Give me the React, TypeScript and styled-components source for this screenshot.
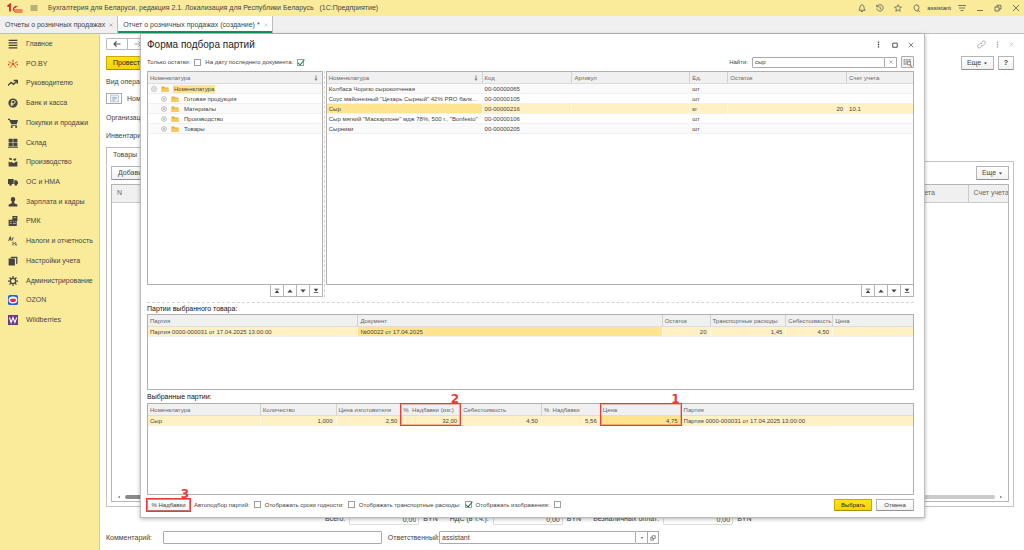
import React from 'react';
import styled, { createGlobalStyle, css } from 'styled-components';

const Global = createGlobalStyle`
  * { box-sizing: border-box; }
  body { margin: 0; background: #fff; color: #444; font: 7px/10px "Liberation Sans", Arial, sans-serif; }
  button, input { font: inherit; color: inherit; margin: 0; padding: 0; }
  button { cursor: pointer; white-space: nowrap; }
  svg { display: block; flex: none; }
`;

/* ---------- page shell ---------- */
const Page = styled.div`
  min-height: 100vh;
  display: grid;
  grid-template-rows: 16px 18px 1fr;
`;
const TopBar = styled.header`
  display: flex;
  align-items: center;
  background: #faeb9b;
  padding: 0 4px 0 7px;
`;
const AppTitle = styled.div`
  margin-left: 10px;
  flex: 1;
  white-space: pre;
`;
const Group = styled.div<{ $gap: number }>`
  display: flex;
  align-items: center;
  gap: ${(p) => p.$gap}px;
`;
const TopTools = styled(Group)`
  padding-right: 10px;
`;
const UserLink = styled.a`
  color: #333;
  font-size: 6px;
  text-decoration: none;
`;
const IconButton = styled.button<{ $tone?: string }>`
  border: 0;
  background: none;
  display: flex;
  color: ${(p) => p.$tone ?? '#555'};
`;
const TabStrip = styled.nav`
  display: flex;
  background: #f0f0f0;
  border-bottom: 1px solid #bdbdbd;
`;
const DocTab = styled.div<{ $active?: boolean }>`
  display: flex;
  align-items: center;
  gap: 4px;
  padding: 0 4px 0 5px;
  border-right: 1px solid #bdbdbd;
  white-space: nowrap;
  ${(p) =>
    p.$active &&
    css`
      background: #fff;
      box-shadow: inset 0 -2px 0 #16925a;
    `}
`;
const Body = styled.div`
  display: grid;
  grid-template-columns: 100px 1fr;
`;
const Sidebar = styled.aside`
  background: #faeb9b;
  border-right: 1px solid #d8cd94;
`;
const MenuList = styled.ul`
  list-style: none;
  margin: 0;
  padding: 0;
  height: 296px;
  display: grid;
  grid-auto-rows: 1fr;
`;
const MenuLink = styled.a`
  height: 100%;
  display: flex;
  align-items: center;
  gap: 8px;
  padding-left: 8px;
  color: #444;
  text-decoration: none;
`;
const Main = styled.main`
  position: relative;
  display: flex;
  flex-direction: column;
  padding: 4px 10px 6px 6px;
`;

/* ---------- document form ---------- */
const FormRow = styled.div<{ $h: number; $top?: number }>`
  display: flex;
  align-items: center;
  height: ${(p) => p.$h}px;
  margin-top: ${(p) => p.$top ?? 0}px;
  white-space: nowrap;
`;
const Spacer = styled.div`
  flex: 1;
`;
const Button = styled.button<{ $primary?: boolean; $w?: number; $small?: boolean }>`
  height: ${(p) => (p.$small ? 12 : 14)}px;
  width: ${(p) => (p.$w ? `${p.$w}px` : 'auto')};
  padding: 0 6px;
  display: flex;
  align-items: center;
  justify-content: center;
  font-size: ${(p) => (p.$small ? 6 : 7)}px;
  border: 1px solid ${(p) => (p.$primary ? '#c9ab00' : '#b5b5b5')};
  border-bottom-color: ${(p) => (p.$primary ? '#a88f00' : '#929292')};
  border-radius: 1px;
  background: ${(p) => (p.$primary ? 'linear-gradient(#ffe31a, #f5d400)' : 'linear-gradient(#fff, #f1f1f1)')};
  color: ${(p) => (p.$primary ? '#222' : '#444')};
`;
const NavPair = styled.div`
  display: flex;
  height: 12px;
  border: 1px solid #bbb;
  border-radius: 1px;
  button { width: 20px; align-items: center; justify-content: center; }
  button + button { border-left: 1px solid #bbb; }
`;
const SquareButton = styled.button`
  width: 16px;
  height: 11px;
  margin-right: 5px;
  display: grid;
  place-items: center;
  border: 1px solid #a9a9a9;
  background: #fff;
`;
const SectionTab = styled.button`
  align-self: flex-start;
  height: 15px;
  margin: 6px 0 -1px;
  padding: 0 6px;
  border: 1px solid #bdbdbd;
  border-bottom: 0;
  background: #fff;
  position: relative;
`;
const Panel = styled.section`
  flex: 1;
  display: flex;
  flex-direction: column;
  border: 1px solid #c4c4c4;
  padding: 4px;
`;
const GoodsFrame = styled.div`
  flex: 1;
  display: flex;
  flex-direction: column;
  justify-content: space-between;
  margin-top: 4px;
  border: 1px solid #b5b5b5;
`;
const GoodsTable = styled.table`
  width: 100%;
  table-layout: fixed;
  border-collapse: collapse;
  th {
    height: 17px;
    padding: 0 5px;
    background: #f0f0f0;
    border-bottom: 1px solid #ccc;
    font-weight: 400;
    text-align: left;
    white-space: nowrap;
    overflow: hidden;
    color: #666;
  }
  th + th { border-left: 1px solid #ccc; }
`;
const ScrollBar = styled.div`
  display: flex;
  align-items: center;
  gap: 4px;
  height: 8px;
  padding: 0 5px;
  color: #666;
`;
const Track = styled.div`
  flex: 1;
  height: 4px;
  border-radius: 2px;
  background: linear-gradient(to right, #8a8a8a 60%, #cbcbcb 60%);
`;
const TextField = styled.input<{ $w: number }>`
  width: ${(p) => p.$w}px;
  height: 13px;
  padding: 0 2px;
  border: 1px solid #aaa;
  border-radius: 1px;
  background: #fff;
  outline: 0;
`;
const Amount = styled(TextField)`
  height: 12px;
  border-color: #ddd;
  text-align: right;
`;
const FieldLabel = styled.label<{ $w: number }>`
  width: ${(p) => p.$w}px;
  flex: none;
`;
const AddOn = styled.button<{ $w: number }>`
  width: ${(p) => p.$w}px;
  height: 13px;
  border: 1px solid #aaa;
  border-left: 0;
  background: #fff;
  display: grid;
  place-items: center;
`;

/* ---------- selection dialog ---------- */
const Dialog = styled.section`
  position: absolute;
  inset: 0 99px 32px 40px;
  display: flex;
  flex-direction: column;
  padding: 0 10px 6px 6px;
  background: #fff;
  border: 1px solid #bdbdbd;
  border-top: 0;
  box-shadow: 0 1px 4px rgba(0, 0, 0, 0.3);
  font-size: 6px;
  line-height: 8px;
`;
const DialogHead = styled.div`
  display: flex;
  align-items: center;
  height: 21px;
`;
const DialogTitle = styled.h1`
  flex: 1;
  margin: 0;
  font: 400 10px/12px "Liberation Sans", Arial, sans-serif;
  color: #222;
`;
const DialogTools = styled.div`
  display: flex;
  align-items: center;
  height: 14px;
  margin-bottom: 2px;
  white-space: nowrap;
`;
const CheckLabel = styled.label`
  display: flex;
  align-items: center;
  gap: 4px;
  margin-right: 4px;
  white-space: nowrap;
`;
const Tick = styled.input.attrs({ type: 'checkbox' })<{ $green?: boolean }>`
  appearance: none;
  position: relative;
  width: 7px;
  height: 7px;
  border: 1px solid #a0a0a0;
  background: #fff;
  &:checked::after {
    content: '';
    position: absolute;
    left: 1px;
    top: -2px;
    width: 3px;
    height: 6px;
    border: solid ${(p) => (p.$green ? '#0a9150' : '#1d6b45')};
    border-width: 0 1px 1px 0;
    transform: rotate(40deg);
  }
`;
const SearchField = styled(TextField)`
  height: 11px;
  font-size: 6px;
`;
const SearchClear = styled(AddOn)`
  height: 11px;
`;
const SearchButton = styled.button`
  width: 13px;
  height: 12px;
  margin-left: 4px;
  display: grid;
  place-items: center;
  border: 1px solid #aaa;
  border-radius: 1px;
  background: #f5f5f5;
`;
const Lists = styled.div`
  flex: 229 0 0;
  display: grid;
  grid-template-columns: 176fr 589fr;
  column-gap: 3px;
`;
const ListColumn = styled.div`
  position: relative;
  min-width: 0;
  display: flex;
  flex-direction: column;
  & + &::before {
    content: '';
    position: absolute;
    left: -2px;
    top: 0;
    bottom: 0;
    border-left: 1px dashed #d5d5d5;
  }
`;
const Frame = styled.div<{ $grow: number }>`
  flex: ${(p) => p.$grow} 0 0;
  border: 1px solid #b0b0b0;
`;
const Grid = styled.table`
  width: 100%;
  table-layout: fixed;
  border-collapse: separate;
  border-spacing: 0;
  th, td {
    padding: 0 3px 0 2px;
    text-align: left;
    white-space: nowrap;
    font-weight: 400;
  }
  th { position: relative; height: 12px; background: #f0f0f0; border-bottom: 1px solid #ddd; color: #666; }
  th + th { border-left: 1px solid #d2d2d2; }
  td { height: 10px; overflow: hidden; text-overflow: ellipsis; border-bottom: 1px solid #f0f0f0; }
  td + td { border-left: 1px solid transparent; }
`;
const Row = styled.tr<{ $selected?: boolean }>`
  &:nth-child(odd) td { background: #fafafa; }
  ${(p) =>
    p.$selected &&
    css`
      && td { background: #fff1c4; }
      td + td { border-left-color: #fff9e6; }
    `}
`;
const Cell = styled.td<{ $num?: boolean; $current?: boolean }>`
  ${(p) => p.$num && '&&& { text-align: right; }'}
  ${(p) => p.$current && '&&&& { background: #ffe48f; }'}
`;
const HeadLine = styled.span`
  display: flex;
  align-items: center;
  justify-content: space-between;
`;
const TreeItem = styled.div<{ $level: number }>`
  display: flex;
  align-items: center;
  gap: 4px;
  padding-left: ${(p) => p.$level * 10 + 1}px;
`;
const NodeName = styled.span<{ $on?: boolean }>`
  padding: 0 1px;
  background: ${(p) => (p.$on ? '#ffe48f' : 'transparent')};
`;
const Pager = styled.div`
  align-self: flex-end;
  display: flex;
  border: solid #b5b5b5;
  border-width: 0 1px 1px 0;
`;
const PagerButton = styled.button`
  width: 13px;
  height: 11px;
  display: grid;
  place-items: center;
  border: 0;
  border-left: 1px solid #b5b5b5;
  background: #fff;
`;
const Divider = styled.hr`
  width: 100%;
  margin: 5px 0 0;
  border: 0;
  border-top: 1px dashed #d5d5d5;
`;
const Caption = styled.h2<{ $h: number }>`
  margin: 0;
  height: ${(p) => p.$h}px;
  display: flex;
  align-items: center;
  font-size: 7px;
  font-weight: 400;
  color: #111;
`;
const DialogFoot = styled.div`
  display: flex;
  align-items: center;
  height: 12px;
  margin-top: 4px;
`;
const MarkedButton = styled.div`
  position: relative;
  margin-right: 4px;
`;
const Callout = styled.span<{ $h: number }>`
  position: absolute;
  z-index: 1;
  top: -1px;
  left: -1px;
  right: -1px;
  height: ${(p) => p.$h}px;
  border: 1px solid #ee3a34;
  outline: 1px solid rgba(238, 58, 52, 0.35);
  outline-offset: -2px;
  pointer-events: none;
`;
const CalloutNumber = styled.b`
  position: absolute;
  right: 1px;
  bottom: 100%;
  font: 700 12px/9px "DejaVu Sans", sans-serif;
  color: #ee3a34;
`;

/* ---------- icons ---------- */
type IconName = string;
const s = { fill: 'none', stroke: 'currentColor', strokeWidth: 1.6 } as const;
const glyphs: Record<IconName, React.ReactNode> = {
  menu: <path {...s} d="M1 4h14M1 8h14M1 12h14" />,
  list: <path {...s} strokeWidth={2} d="M1 2h14M1 6h14M1 10h14M1 14h14" />,
  spark: (
    <g stroke="#e0402c" strokeWidth="1.6" fill="#e0402c">
      <path d="M8 5V1M11 7l4-3M10 10l3 4M6 10l-3 4M5 7L1 4" />
      <circle cx="8" cy="8" r="1.5" />
      <circle cx="15" cy="9" r=".8" />
      <circle cx="1" cy="9" r=".8" />
    </g>
  ),
  trend: <path {...s} strokeWidth={2.2} d="M0 12l5-5 4 3 5-5M9 4h6v5" />,
  ruble: (
    <g>
      <circle cx="8" cy="8" r="7.4" fill="currentColor" />
      <path d="M6 13V4h3a2.4 2.4 0 010 5H4M4 11h5" fill="none" stroke="#faeb9b" strokeWidth="1.5" />
    </g>
  ),
  cart: (
    <g fill="currentColor">
      <path d="M0 1h3l1 2h12l-2 7H5L2 3H0zM5 11h9v1.5H5z" />
      <circle cx="6" cy="14.4" r="1.6" />
      <circle cx="13" cy="14.4" r="1.6" />
    </g>
  ),
  store: <path fill="currentColor" d="M1 1h6.500v6H1zM8.500 1H15v6H8.500zM1 8h6.500v5H1zM8.500 8H15v5H8.500zM0 14h16v1.500H0z" />,
  factory: <path fill="currentColor" d="M1 15V7l4 2V7l4 3 3-2 3-1v8zM2 1l4 1v3L2 4zM8 3l5-1v3l-3 1z" />,
  truck: (
    <g fill="currentColor">
      <path d="M0 3h9v8H0zM10 5h3.500L16 8v3h-6z" />
      <circle cx="4" cy="12" r="2" />
      <circle cx="12.500" cy="12" r="2" />
    </g>
  ),
  person: <path fill="currentColor" d="M8 0a3.500 3.500 0 013.500 3.800C11.500 6 10 8 8 8S4.500 6 4.500 3.800A3.500 3.500 0 018 0zM6 8h4v2l5 2v3H1v-3l5-2z" />,
  register: (
    <g>
      <path fill="currentColor" d="M7 0h8v8h-1v8H1V6h6z" />
      <path stroke="#faeb9b" d="M9 2.500h4M3 9h3M3 12h3M8 9h1.500M11 9h1.500M8 12h4.500" />
    </g>
  ),
  tax: (
    <g {...s} strokeWidth={1.4}>
      <path d="M1 8l2.500-7L5 8M2 5h3M7 7V3h2M8 9v6M13 10l-3 2 3 3M13 12v3" />
    </g>
  ),
  books: <path fill="currentColor" d="M5 1h10v11l-2 1V3H4zM1 4h10v11H1z" />,
  gear: (
    <g {...s} strokeWidth={2}>
      <circle cx="8" cy="8" r="4.200" />
      <path d="M8 0v3M8 13v3M0 8h3M13 8h3M2.500 2.500l2 2M11.500 11.500l2 2M13.500 2.500l-2 2M4.500 11.500l-2 2" />
    </g>
  ),
  ozon: (
    <g>
      <rect width="16" height="16" rx="3" fill="#1763e6" />
      <ellipse cx="8" cy="8" rx="7" ry="5.500" fill="#fff" />
      <ellipse cx="8" cy="8.500" rx="4.800" ry="2.800" fill="#ef2256" />
    </g>
  ),
  wb: (
    <g>
      <rect width="16" height="16" fill="#6b3b86" />
      <path d="M2.500 4l2.500 8 3-8 3 8 3-8" fill="none" stroke="#fff" strokeWidth="1.700" />
    </g>
  ),
  bell: <path {...s} d="M1.500 12.500c2-1 2-3 2.500-6C4.500 3 6 1.500 8 1.500S11.500 3 12 6.500c.5 3 .5 5 2.500 6zM6 15h4" />,
  history: <path {...s} d="M2 5a6.500 6.500 0 11-.5 4M1.500 1.500V5.500h4M8 4.500V9l3 1.500" />,
  star: <path {...s} strokeWidth={1.4} d="M8 1.200l2 4.800 5 .3-3.900 3.300 1.300 5L8 11.900l-4.400 2.700 1.300-5L1 6.300 6 6z" />,
  search: <path {...s} d="M13 13.500A6.300 6.300 0 118 1.500a6 6 0 016 6c0 2-1 3.500-2.500 4.500l4 3.500" />,
  filter: <path {...s} d="M0 3h16M2 8h12M5 13h6" />,
  minimize: <path {...s} d="M2 13h12" />,
  restore: <path {...s} d="M2 6h8v8H2zM6 6V2.500h8V10h-4" />,
  close: <path {...s} d="M2 2l12 12M14 2L2 14" />,
  box: <path {...s} strokeWidth={2.2} d="M2 3h12v11H2z" />,
  dots: <path fill="currentColor" d="M6.500 1h3v3h-3zM6.500 6.500h3v3h-3zM6.500 12h3v3h-3z" />,
  link: <path {...s} strokeWidth={1.400} d="M7 9.500a3 3 0 004 0l3-3a2.800 2.800 0 00-4-4L8 4.500M9 6.500a3 3 0 00-4 0l-3 3a2.800 2.800 0 004 4l2-2" />,
  back: <path {...s} strokeWidth={2.400} d="M15 8H2M7 3L2 8l5 5" />,
  forward: <path {...s} strokeWidth={2} d="M1 8h13M9 3l5 5-5 5" />,
  down: <path {...s} strokeWidth={2} d="M8 1v13M4.500 10L8 14l3.500-4" />,
  caret: <path fill="currentColor" d="M3 5h10l-5 6z" />,
  pgFirst: <path fill="currentColor" d="M2 2h12v2H2zM8 5l6 8H2z" />,
  pgUp: <path fill="currentColor" d="M8 4l7 8H1z" />,
  pgDown: <path fill="currentColor" d="M8 12L1 4h14z" />,
  pgLast: <path fill="currentColor" d="M8 10L2 2h12zM2 11h12v2H2z" />,
  left: <path fill="currentColor" d="M11 3v10L4 8z" />,
  right: <path fill="currentColor" d="M5 3v10l7-5z" />,
  plus: (
    <g stroke="#999" strokeWidth="1.600" fill="none">
      <circle cx="8" cy="8" r="6.500" />
      <path d="M4.500 8h7M8 4.500v7" />
    </g>
  ),
  minus: (
    <g stroke="#999" strokeWidth="1.600" fill="none">
      <circle cx="8" cy="8" r="6.500" />
      <path d="M4.500 8h7" />
    </g>
  ),
  folder: (
    <g>
      <path d="M1 3h5l1.500 2H15v9H1z" fill="#e7ab2f" />
      <path d="M1 7h14v7H1z" fill="#f7cb5e" />
    </g>
  ),
  card: (
    <g>
      <path d="M1 2h14v12H1z" fill="#eef3f8" stroke="#8fa3b8" />
      <path d="M4 6h8M4 8.500h8M4 11h5" stroke="#6d87a3" />
    </g>
  ),
  grid: (
    <g>
      <path d="M1 2h13v10H1z" fill="#999" />
      <path d="M1 5h13M1 8.500h13M5 2v10M9.500 2v10" stroke="#f5f5f5" />
      <circle cx="10.500" cy="9.500" r="3" fill="#fff" stroke="#666" strokeWidth="1.300" />
      <path d="M12.500 12l3 3.500" stroke="#b5543a" strokeWidth="1.800" />
    </g>
  ),
  open: <path {...s} d="M6 2h8v7H6zM9 9v5H2V6h4" />,
};
const Icon = ({ name, size = 8 }: { name: IconName; size?: number }) => (
  <svg width={size} height={size} viewBox="0 0 16 16" aria-hidden="true">
    {glyphs[name]}
  </svg>
);
const Logo = () => (
  <svg width="16" height="10" viewBox="0 0 32 20" aria-label="1С">
    <g fill="none" stroke="#d9281f" strokeWidth="2">
      <path d="M1 7l5-4v14" strokeWidth="3.600" />
      <path d="M21 7a6 6 0 10-5 11h15" />
      <path d="M18 9a2.800 2.800 0 10-2 5h15" />
    </g>
  </svg>
);

/* ---------- data ---------- */
const sections: [IconName, string][] = [
  ['list', 'Главное'],
  ['spark', 'PO.BY'],
  ['trend', 'Руководителю'],
  ['ruble', 'Банк и касса'],
  ['cart', 'Покупки и продажи'],
  ['store', 'Склад'],
  ['factory', 'Производство'],
  ['truck', 'ОС и НМА'],
  ['person', 'Зарплата и кадры'],
  ['register', 'РМК'],
  ['tax', 'Налоги и отчетность'],
  ['books', 'Настройки учета'],
  ['gear', 'Администрирование'],
  ['ozon', 'OZON'],
  ['wb', 'Wildberries'],
];
const groups = ['Готовая продукция', 'Материалы', 'Производство', 'Товары'];
const items = [
  { name: 'Колбаса Чоризо сырокопченая', code: '00-00000065', unit: 'шт' },
  { name: 'Соус майонезный "Цезарь Сырный" 42% PRO балк 1 кг', code: '00-00000105', unit: 'шт' },
  { name: 'Сыр', code: '00-00000216', unit: 'кг', rest: '20', account: '10.1' },
  { name: 'Сыр мягкий "Маскарпоне" мдж 78%, 500 г., "Bonfesto"', code: '00-00000106', unit: 'шт' },
  { name: 'Сырники', code: '00-00000205', unit: 'шт' },
];
const batch = 'Партия 0000-000031 от 17.04.2025 13:00:00';
const totals = ['Всего:', 'НДС (в т.ч.):', 'Безналичных оплат:'];

const TotalsBar = styled.div`
  display: flex;
  align-items: center;
  gap: 12px;
  height: 12px;
  margin: 6px 0 0 219px;
  white-space: nowrap;
`;
const Total = styled.label`
  display: flex;
  align-items: center;
  gap: 4px;
`;

const Cols = ({ widths }: { widths: number[] }) => {
  const sum = widths.reduce((a, b) => a + b, 0);
  return (
    <colgroup>
      {widths.map((w, i) => (
        <col key={i} width={`${(w / sum) * 100}%`} />
      ))}
    </colgroup>
  );
};
const Paging = () => (
  <Pager>
    {[
      ['pgFirst', 'В начало'],
      ['pgUp', 'Вверх'],
      ['pgDown', 'Вниз'],
      ['pgLast', 'В конец'],
    ].map(([n, label]) => (
      <PagerButton key={n} aria-label={label}>
        <Icon name={n} size={6} />
      </PagerButton>
    ))}
  </Pager>
);
const Check = ({ label, checked, green }: { label: string; checked?: boolean; green?: boolean }) => (
  <CheckLabel>
    {label}
    <Tick defaultChecked={checked} $green={green} />
  </CheckLabel>
);

const PickDialog = () => (
  <Dialog role="dialog" aria-label="Форма подбора партий">
    <DialogHead>
      <DialogTitle>Форма подбора партий</DialogTitle>
      <Group $gap={10}>
        <IconButton aria-label="Меню" $tone="#333"><Icon name="dots" size={7} /></IconButton>
        <IconButton aria-label="Развернуть" $tone="#333"><Icon name="box" size={6} /></IconButton>
        <IconButton aria-label="Закрыть" $tone="#333"><Icon name="close" size={6} /></IconButton>
      </Group>
    </DialogHead>
    <DialogTools>
      <Check label="Только остатки:" />
      <Check label="На дату последнего документа:" checked green />
      <Spacer />
      <CheckLabel htmlFor="find">Найти:</CheckLabel>
      <SearchField id="find" $w={133} defaultValue="сыр" />
      <SearchClear $w={12} aria-label="Очистить"><Icon name="close" size={4} /></SearchClear>
      <SearchButton aria-label="Поиск"><Icon name="grid" size={9} /></SearchButton>
    </DialogTools>

    <Lists>
      <ListColumn>
        <Frame $grow={1}>
          <Grid>
            <thead>
              <tr><th><HeadLine>Номенклатура<Icon name="down" size={6} /></HeadLine></th></tr>
            </thead>
            <tbody>
              <Row>
                <td>
                  <TreeItem $level={0}>
                    <Icon name="minus" size={6} />
                    <Icon name="folder" size={8} />
                    <NodeName $on>Номенклатура</NodeName>
                  </TreeItem>
                </td>
              </Row>
              {groups.map((g) => (
                <Row key={g}>
                  <td>
                    <TreeItem $level={1}>
                      <Icon name="plus" size={6} />
                      <Icon name="folder" size={8} />
                      <NodeName>{g}</NodeName>
                    </TreeItem>
                  </td>
                </Row>
              ))}
            </tbody>
          </Grid>
        </Frame>
        <Paging />
      </ListColumn>
      <ListColumn>
        <Frame $grow={1}>
          <Grid>
            <Cols widths={[155, 90, 118, 38, 119, 67]} />
            <thead>
              <tr>
                <th><HeadLine>Номенклатура<Icon name="down" size={6} /></HeadLine></th>
                <th>Код</th>
                <th>Артикул</th>
                <th>Ед.</th>
                <th>Остаток</th>
                <th>Счет учета</th>
              </tr>
            </thead>
            <tbody>
              {items.map((r) => (
                <Row key={r.code} $selected={r.name === 'Сыр'}>
                  <Cell $current={r.name === 'Сыр'}>{r.name}</Cell>
                  <td>{r.code}</td>
                  <td />
                  <td>{r.unit}</td>
                  <Cell $num>{r.rest}</Cell>
                  <td>{r.account}</td>
                </Row>
              ))}
            </tbody>
          </Grid>
        </Frame>
        <Paging />
      </ListColumn>
    </Lists>

    <Divider />
    <Caption $h={11}>Партии выбранного товара:</Caption>
    <Frame $grow={75}>
      <Grid>
        <Cols widths={[210, 305, 48, 76, 47, 81]} />
        <thead>
          <tr>
            <th>Партия</th>
            <th>Документ</th>
            <th>Остаток</th>
            <th>Транспортные расходы</th>
            <th>Себестоимость</th>
            <th>Цена</th>
          </tr>
        </thead>
        <tbody>
          <Row $selected>
            <td>{batch}</td>
            <Cell $current>№00022 от 17.04.2025</Cell>
            <Cell $num>20</Cell>
            <Cell $num>1,45</Cell>
            <Cell $num>4,50</Cell>
            <td />
          </Row>
        </tbody>
      </Grid>
    </Frame>

    <Caption $h={13}>Выбранные партии:</Caption>
    <Frame $grow={91}>
      <Grid>
        <Cols widths={[112, 76, 65, 60, 81, 59, 81, 233]} />
        <thead>
          <tr>
            <th>Номенклатура</th>
            <th>Количество</th>
            <th>Цена изготовителя</th>
            <th>
              %&nbsp; Надбавки (изг.)
              <Callout $h={23}><CalloutNumber>2</CalloutNumber></Callout>
            </th>
            <th>Себестоимость</th>
            <th>%&nbsp; Надбавки</th>
            <th>
              Цена
              <Callout $h={23}><CalloutNumber>1</CalloutNumber></Callout>
            </th>
            <th>Партия</th>
          </tr>
        </thead>
        <tbody>
          <Row $selected>
            <td>Сыр</td>
            <Cell $num>1,000</Cell>
            <Cell $num>2,50</Cell>
            <Cell $num>32,00</Cell>
            <Cell $num>4,50</Cell>
            <Cell $num>5,56</Cell>
            <Cell $num $current>4,75</Cell>
            <td>{batch}</td>
          </Row>
        </tbody>
      </Grid>
    </Frame>

    <DialogFoot>
      <MarkedButton>
        <Button $small $w={43}>% Надбавки</Button>
        <Callout $h={14}><CalloutNumber>3</CalloutNumber></Callout>
      </MarkedButton>
      <Check label="Автоподбор партий:" />
      <Check label="Отображать сроки годности:" />
      <Check label="Отображать транспортные расходы:" checked />
      <Check label="Отображать изображения:" />
      <Spacer />
      <Group $gap={4}>
        <Button $small $primary $w={38}>Выбрать</Button>
        <Button $small $w={38}>Отмена</Button>
      </Group>
    </DialogFoot>
  </Dialog>
);

const DocumentForm = () => (
  <>
    <FormRow $h={12}>
      <NavPair>
        <IconButton aria-label="Назад"><Icon name="back" size={8} /></IconButton>
        <IconButton aria-label="Вперед" $tone="#aaa"><Icon name="forward" size={8} /></IconButton>
      </NavPair>
      <Spacer />
      <Group $gap={8}>
        <IconButton aria-label="Ссылка" $tone="#999"><Icon name="link" size={9} /></IconButton>
        <IconButton aria-label="Меню" $tone="#999"><Icon name="dots" size={7} /></IconButton>
        <IconButton aria-label="Закрыть" $tone="#aaa"><Icon name="close" size={5} /></IconButton>
      </Group>
    </FormRow>
    <FormRow $h={14} $top={6}>
      <Button $primary>Провести и закрыть</Button>
      <Spacer />
      <Group $gap={4}>
        <Button $w={33}>Еще&nbsp;<Icon name="caret" size={5} /></Button>
        <Button $w={16}><b>?</b></Button>
      </Group>
    </FormRow>
    <FormRow $h={10} $top={7}>Вид операции:</FormRow>
    <FormRow $h={11} $top={6}>
      <SquareButton aria-label="Реквизиты"><Icon name="card" size={9} /></SquareButton>
      Номер:
    </FormRow>
    <FormRow $h={10} $top={9}>Организация:</FormRow>
    <FormRow $h={10} $top={8}>Инвентаризация:</FormRow>
    <SectionTab>Товары</SectionTab>
    <Panel>
      <FormRow $h={14}>
        <Button>Добавить</Button>
        <Spacer />
        <Button $w={33}>Еще&nbsp;<Icon name="caret" size={5} /></Button>
      </FormRow>
      <GoodsFrame>
        <GoodsTable>
          <Cols widths={[783, 74, 40]} />
          <thead>
            <tr>
              <th>N</th>
              <th>Счет учета</th>
              <th>Счет учета</th>
            </tr>
          </thead>
        </GoodsTable>
        <ScrollBar>
          <Icon name="left" size={4} />
          <Track />
          <Icon name="right" size={4} />
        </ScrollBar>
      </GoodsFrame>
    </Panel>
    <TotalsBar>
      {totals.map((t) => (
        <Total key={t}>
          {t}
          <Amount $w={70} defaultValue="0,00" />
          BYN
        </Total>
      ))}
    </TotalsBar>
    <FormRow $h={13} $top={6}>
      <FieldLabel $w={57} htmlFor="comment">Комментарий:</FieldLabel>
      <TextField id="comment" $w={219} />
      <Group $gap={5} />
      <FieldLabel as="label" $w={57} htmlFor="owner">&nbsp;&nbsp; Ответственный:</FieldLabel>
      <TextField id="owner" $w={197} defaultValue="assistant" />
      <AddOn $w={12} aria-label="Выбрать"><Icon name="caret" size={4} /></AddOn>
      <AddOn $w={11} aria-label="Открыть"><Icon name="open" size={6} /></AddOn>
    </FormRow>
  </>
);

export default function App() {
  return (
    <Page>
      <Global />
      <TopBar>
        <Group $gap={7}>
          <Logo />
          <IconButton aria-label="Главное меню"><Icon name="menu" /></IconButton>
        </Group>
        <AppTitle>{'Бухгалтерия для Беларуси, редакция 2.1. Локализация для Республики Беларусь   (1С:Предприятие)'}</AppTitle>
        <TopTools $gap={7}>
          <Group $gap={10}>
            <IconButton aria-label="Уведомления"><Icon name="bell" /></IconButton>
            <IconButton aria-label="История"><Icon name="history" /></IconButton>
            <IconButton aria-label="Избранное"><Icon name="star" /></IconButton>
            <IconButton aria-label="Поиск"><Icon name="search" /></IconButton>
          </Group>
          <UserLink href="#">assistant</UserLink>
          <IconButton aria-label="Настройки"><Icon name="filter" /></IconButton>
        </TopTools>
        <Group $gap={10}>
          <IconButton aria-label="Свернуть"><Icon name="minimize" /></IconButton>
          <IconButton aria-label="Восстановить"><Icon name="restore" /></IconButton>
          <IconButton aria-label="Выйти"><Icon name="close" /></IconButton>
        </Group>
      </TopBar>
      <TabStrip>
        <DocTab>
          Отчеты о розничных продажах
          <IconButton aria-label="Закрыть вкладку"><Icon name="close" size={4} /></IconButton>
        </DocTab>
        <DocTab $active>
          Отчет о розничных продажах (создание) *
          <IconButton aria-label="Закрыть вкладку" $tone="#999"><Icon name="close" size={4} /></IconButton>
        </DocTab>
      </TabStrip>
      <Body>
        <Sidebar>
          <MenuList>
            {sections.map(([icon, label]) => (
              <li key={label}>
                <MenuLink href="#"><Icon name={icon} size={10} />{label}</MenuLink>
              </li>
            ))}
          </MenuList>
        </Sidebar>
        <Main>
          <DocumentForm />
          <PickDialog />
        </Main>
      </Body>
    </Page>
  );
}
